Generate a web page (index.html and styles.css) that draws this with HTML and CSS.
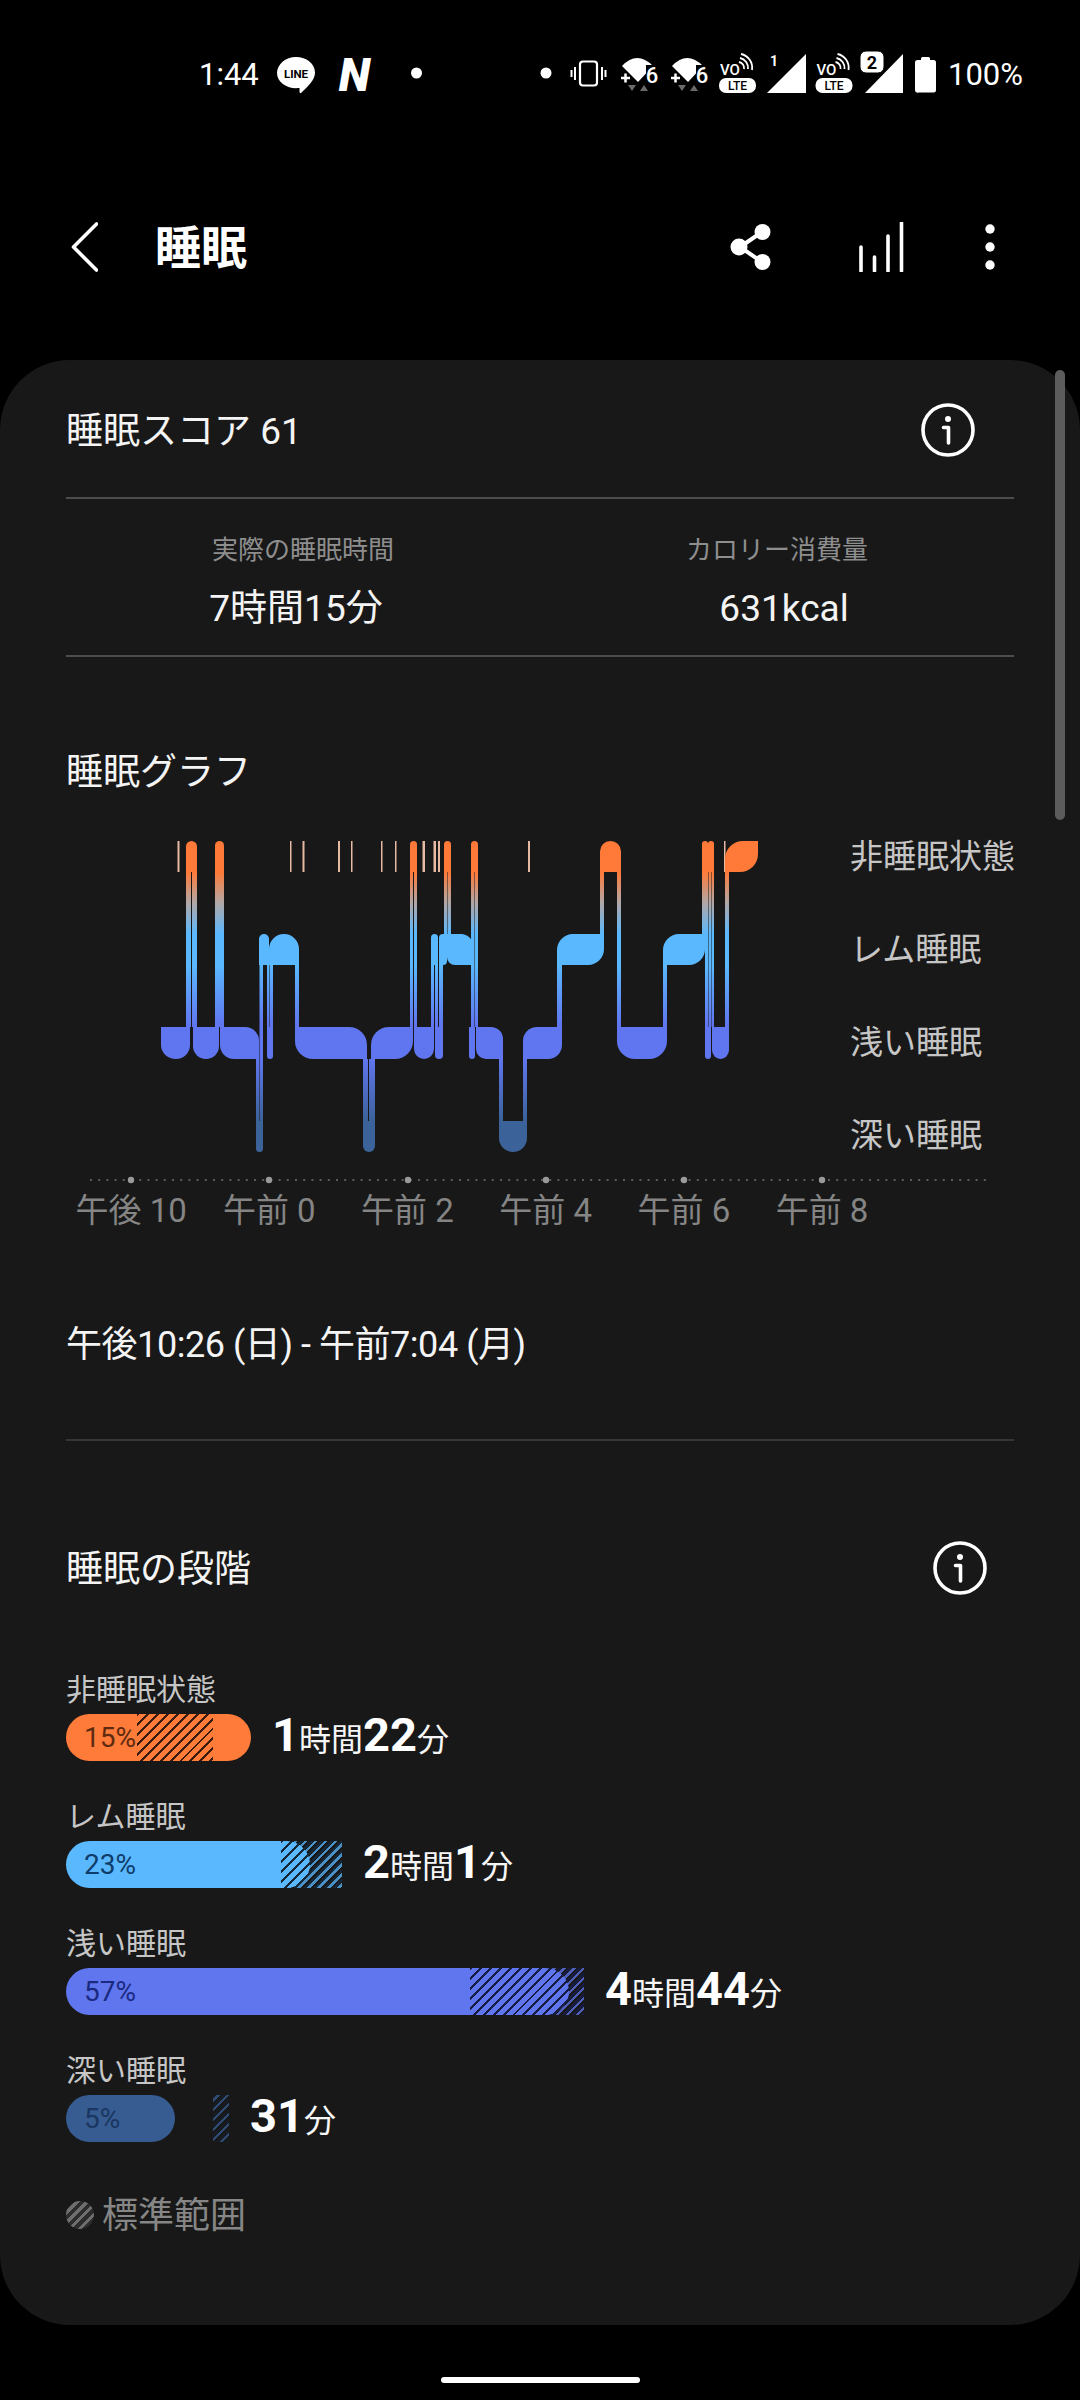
FILE: index.html
```html
<!DOCTYPE html>
<html lang="ja">
<head>
<meta charset="utf-8">
<title>睡眠</title>
<link rel="stylesheet" href="styles.css">
</head>
<body>
<div class="status">
  <span class="status-time">1:44</span>
  <svg class="st-line" width="40" height="46" viewBox="277 50 40 46">
    <path d="M297 57c10.500 0 19 6.800 19 15.500 0 8-8 14.500-14 20.500-1 0.500-1.500-0.500-1.500-1.500v-3.500c-1 0-2.500 0.200-3.500 0.200-10.500 0-19-6.800-19-15.200S286.500 57 297 57z" fill="#fff"/>
    <text x="297" y="78" class="st-svgt st-lineword">LINE</text>
  </svg>
  <span class="status-n">N</span>
  <svg class="st-dot" width="12" height="46" viewBox="412 50 12 46"><circle cx="417.500" cy="73" r="5.500" fill="#fff"/></svg>
  <svg class="st-right" width="396" height="46" viewBox="540 50 396 46">
    <defs>
      <g id="wifi">
        <path d="M622 66Q637 50 653 66L638 82Z" fill="#fff"/>
        <rect x="646" y="65" width="13" height="20" fill="#000"/>
        <text x="652" y="83" class="st-svgt st-six">6</text>
        <path d="M621 78H630M625.500 73.500V82.500" stroke="#fff" stroke-width="2.500" fill="none"/>
        <path d="M628 85H636L632 91Z M640 91H648L644 85Z" fill="#6a6a6a"/>
      </g>
      <g id="volte">
        <text x="730" y="75" class="st-svgt st-vo">VO</text>
        <path d="M739 62a6 6 0 0 1 5 7M740 58a10 10 0 0 1 8 11M741 54a14 14 0 0 1 11 16" stroke="#fff" stroke-width="1.800" fill="none"/>
        <rect x="719" y="78" width="37" height="15" rx="7" fill="#fff"/>
        <text x="737.500" y="90" class="st-svgt st-lte">LTE</text>
      </g>
    </defs>
    <circle cx="546" cy="73" r="5.500" fill="#fff"/>
    <rect x="580" y="61.500" width="17" height="24" rx="3" fill="none" stroke="#fff" stroke-width="2.200"/>
    <path d="M575 67V80M571.500 70V77M602 67V80M605.500 70V77" stroke="#fff" stroke-width="2" fill="none"/>
    <use href="#wifi"/>
    <use href="#wifi" x="50"/>
    <use href="#volte"/>
    <path d="M806 54V93H767Z" fill="#fff"/>
    <text x="774" y="66" class="st-svgt st-one">1</text>
    <use href="#volte" x="96.500"/>
    <path d="M903 54V93H865Z" fill="#fff"/>
    <rect x="860" y="51" width="24" height="22" rx="6" fill="#fff" stroke="#000" stroke-width="1"/>
    <text x="872" y="69" class="st-svgt st-two">2</text>
    <path d="M921 60V58.500a1.500 1.500 0 0 1 1.500-1.500h6a1.500 1.500 0 0 1 1.500 1.500V60h3.500a2.500 2.500 0 0 1 2.500 2.500V90a2.500 2.500 0 0 1-2.500 2.500h-15A2.500 2.500 0 0 1 915 90V62.500A2.500 2.500 0 0 1 917.500 60Z" fill="#fff"/>
  </svg>
  <span class="status-batt">100%</span>
</div>

<header class="appbar">
  <svg class="back" width="27" height="50" viewBox="0 0 27 50"><path d="M25.500 2L2.500 25L25.500 48" fill="none" stroke="#fff" stroke-width="3.600" stroke-linecap="round" stroke-linejoin="round"/></svg>
  <h1 class="title">睡眠</h1>
  <svg class="share" width="41" height="46" viewBox="0 0 41 46">
    <path d="M10 23L32 8M10 23L32 38" stroke="#fff" stroke-width="4" fill="none"/>
    <circle cx="9" cy="23" r="8.500" fill="#fff"/><circle cx="32.500" cy="8" r="8" fill="#fff"/><circle cx="32.500" cy="38" r="8" fill="#fff"/>
  </svg>
  <svg class="bars" width="45" height="50" viewBox="0 0 45 50">
    <path d="M2 49V25M15.500 49V35M29 49V14M42.500 49V1" stroke="#fff" stroke-width="3.600" stroke-linecap="round" fill="none"/>
  </svg>
  <svg class="kebab" width="10" height="46" viewBox="0 0 10 46"><circle cx="5" cy="5" r="4.700" fill="#fff"/><circle cx="5" cy="23" r="4.700" fill="#fff"/><circle cx="5" cy="41" r="4.700" fill="#fff"/></svg>
</header>

<main class="card">
  <div class="scrollbar"></div>

  <div class="row-head score-row">
    <span class="heading">睡眠スコア 61</span>
    <svg class="info info-a" width="54" height="54" viewBox="0 0 54 54">
      <circle cx="27" cy="27" r="25" fill="none" stroke="#fff" stroke-width="3.600"/>
      <circle cx="27" cy="16" r="3" fill="#fff"/>
      <path d="M22.500 24.500H27.500V40" fill="none" stroke="#fff" stroke-width="3.600" stroke-linecap="round" stroke-linejoin="round"/>
    </svg>
  </div>

  <div class="stats">
    <div class="stat stat-left"><div class="stat-label">実際の睡眠時間</div><div class="stat-value">7時間15分</div></div>
    <div class="stat stat-right"><div class="stat-label">カロリー消費量</div><div class="stat-value">631kcal</div></div>
  </div>

  <h2 class="heading graph-title">睡眠グラフ</h2>

  <div class="chart-row">
    <svg class="chart" width="784" height="365" viewBox="66 810 784 365">
      <defs>
        <linearGradient id="sleep" gradientUnits="userSpaceOnUse" x1="0" y1="841" x2="0" y2="1152">
          <stop offset="0.100" stop-color="#ff7a38"/>
          <stop offset="0.200" stop-color="#b0a8a8"/>
          <stop offset="0.300" stop-color="#5ab8ff"/>
          <stop offset="0.400" stop-color="#5ab8ff"/>
          <stop offset="0.590" stop-color="#6076f0"/>
          <stop offset="0.700" stop-color="#6076f0"/>
          <stop offset="0.900" stop-color="#3b6299"/>
          <stop offset="1" stop-color="#3b6299"/>
        </linearGradient>
      </defs>
      <g class="ticks">
        <rect x="177.500" y="841" width="2" height="31"/><rect x="290" y="841" width="1.500" height="31"/><rect x="302.500" y="841" width="2" height="31"/><rect x="338" y="841" width="2" height="31"/><rect x="351" y="841" width="1.500" height="31"/><rect x="381" y="841" width="1.500" height="31"/><rect x="395" y="841" width="1.500" height="31"/><rect x="422.500" y="841" width="2.500" height="31"/><rect x="433.500" y="841" width="2.500" height="31"/><rect x="438" y="841" width="2" height="31"/><rect x="528" y="841" width="2" height="31"/><rect x="724" y="841" width="1.500" height="31"/>
      </g>
      <g fill="url(#sleep)">
        <!-- awake -->
        <path d="M186 872V846.500a5.500 5.500 0 0 1 11 0V872Z"/>
        <path d="M215 872V845.500a4.500 4.500 0 0 1 9 0V872Z"/>
        <path d="M410 872V844.500a3.500 3.500 0 0 1 7 0V872Z"/>
        <path d="M444 872V844.500a3.500 3.500 0 0 1 7 0V872Z"/>
        <path d="M471 872V844.500a3.500 3.500 0 0 1 7 0V872Z"/>
        <path d="M600 872V851.500a10.500 10.500 0 0 1 21 0V872Z"/>
        <path d="M702 872V844a3 3 0 0 1 6 0V872Z"/>
        <path d="M708 872V844a3 3 0 0 1 6 0V872Z"/>
        <path d="M725 872V859a18 18 0 0 1 18-18H758V854a18 18 0 0 1-18 18Z"/>
        <!-- rem -->
        <path d="M259 965V939a5 5 0 0 1 10 0V965Z"/>
        <path d="M269 965V949a15 15 0 0 1 30 0V965Z"/>
        <path d="M431 965V937.500a3.500 3.500 0 0 1 7 0V965Z"/>
        <path d="M439 965V938a4 4 0 0 1 4-4H447V961a4 4 0 0 1-4 4Z"/>
        <path d="M447 934H461A12 12 0 0 1 473 946V965H455A8 8 0 0 1 447 957Z"/>
        <path d="M557 965V950a16 16 0 0 1 16-16H604V949a16 16 0 0 1-16 16Z"/>
        <path d="M663 965V950a16 16 0 0 1 16-16H705V949a16 16 0 0 1-16 16Z"/>
        <!-- light -->
        <path d="M161 1027H190V1045A14 14 0 0 1 176 1059A15 14 0 0 1 161 1045Z"/>
        <path d="M193 1027H219V1046A13 13 0 0 1 193 1046Z"/>
        <path d="M220 1027H245A14 14 0 0 1 259 1041V1059H234A14 14 0 0 1 220 1045Z"/>
        <path d="M267 1027H273V1056A3 3 0 0 1 267 1056Z"/>
        <path d="M295 1027H349A18 18 0 0 1 367 1045V1059H313A18 18 0 0 1 295 1041Z"/>
        <path d="M389 1027H413V1041A18 18 0 0 1 395 1059H371V1045A18 18 0 0 1 389 1027Z"/>
        <path d="M414 1027H434V1048.500A10 10.500 0 0 1 414 1048.500Z"/>
        <path d="M435 1027H443V1055A4 4 0 0 1 435 1055Z"/>
        <path d="M469 1027H475V1056A3 3 0 0 1 469 1056Z"/>
        <path d="M476 1027H491A12 12 0 0 1 503 1039V1059H486A10 10 0 0 1 476 1049Z"/>
        <path d="M537 1027H562V1045A14 14 0 0 1 548 1059H523V1041A14 14 0 0 1 537 1027Z"/>
        <path d="M617 1027H667V1041A18 18 0 0 1 649 1059H635A18 18 0 0 1 617 1041Z"/>
        <path d="M705 1027H711V1056A3 3 0 0 1 705 1056Z"/>
        <path d="M712 1027H729V1050A8.500 9 0 0 1 712 1050Z"/>
        <!-- deep -->
        <path d="M256 1121H263V1148.500a3.500 3.500 0 0 1-7 0Z"/>
        <path d="M363 1121H375V1146a6 6 0 0 1-12 0Z"/>
        <path d="M499 1121H527V1138a14 14 0 0 1-28 0Z"/>
        <!-- transitions awake / light -->
        <rect x="186" y="872" width="5" height="155"/><rect x="192" y="872" width="5" height="155"/>
        <rect x="215" y="872" width="9" height="155"/>
        <rect x="410" y="872" width="3" height="155"/><rect x="414" y="872" width="3" height="155"/>
        <rect x="471" y="872" width="3.500" height="155"/><rect x="475" y="872" width="3" height="155"/>
        <rect x="617" y="872" width="4" height="155"/>
        <rect x="705" y="872" width="3" height="155"/><rect x="708.500" y="872" width="2.500" height="155"/><rect x="711.500" y="872" width="2.500" height="155"/>
        <rect x="725" y="872" width="4" height="155"/>
        <!-- transitions awake / rem -->
        <rect x="444" y="872" width="3" height="62"/><rect x="447.500" y="872" width="3.500" height="62"/>
        <rect x="600" y="872" width="4" height="62"/>
        <rect x="702" y="872" width="3" height="62"/>
        <!-- transitions rem / light -->
        <rect x="267" y="965" width="2" height="62"/><rect x="269.500" y="965" width="3.500" height="62"/>
        <rect x="295" y="965" width="4" height="62"/>
        <rect x="431" y="965" width="3" height="62"/><rect x="435" y="965" width="3" height="62"/>
        <rect x="439" y="965" width="4" height="62"/>
        <rect x="557" y="965" width="5" height="62"/>
        <rect x="663" y="965" width="4" height="62"/>
        <!-- transitions to deep -->
        <rect x="259.500" y="965" width="3.500" height="156"/>
        <rect x="256" y="1059" width="3" height="62"/>
        <rect x="363" y="1059" width="5" height="62"/><rect x="369" y="1059" width="6" height="62"/>
        <rect x="499" y="1059" width="4" height="62"/><rect x="523" y="1059" width="4" height="62"/>
      </g>
    </svg>
    <div class="levels">
      <div class="level">非睡眠状態</div>
      <div class="level">レム睡眠</div>
      <div class="level">浅い睡眠</div>
      <div class="level">深い睡眠</div>
    </div>
  </div>

  <svg class="axis" width="948" height="10" viewBox="66 1175 948 10">
    <line x1="90" y1="1180" x2="986" y2="1180" stroke="#5c5c5c" stroke-width="2" stroke-dasharray="2 6.200"/>
    <g fill="#9a9a9a">
      <circle cx="131" cy="1180" r="3.200"/><circle cx="269" cy="1180" r="3.200"/><circle cx="408" cy="1180" r="3.200"/><circle cx="546" cy="1180" r="3.200"/><circle cx="684" cy="1180" r="3.200"/><circle cx="822" cy="1180" r="3.200"/>
    </g>
  </svg>
  <div class="hours">
    <span class="hour">午後 10</span><span class="hour">午前 0</span><span class="hour">午前 2</span><span class="hour">午前 4</span><span class="hour">午前 6</span><span class="hour">午前 8</span>
  </div>

  <div class="range">午後10:26 (日) - 午前7:04 (月)</div>

  <div class="row-head stages-head">
    <h2 class="heading">睡眠の段階</h2>
    <svg class="info info-b" width="54" height="54" viewBox="0 0 54 54">
      <circle cx="27" cy="27" r="25" fill="none" stroke="#fff" stroke-width="3.600"/>
      <circle cx="27" cy="16" r="3" fill="#fff"/>
      <path d="M22.500 24.500H27.500V40" fill="none" stroke="#fff" stroke-width="3.600" stroke-linecap="round" stroke-linejoin="round"/>
    </svg>
  </div>

  <div class="stages">
    <div class="stage stage-awake">
      <div class="stage-label">非睡眠状態</div>
      <div class="stage-line">
        <div class="track" style="width:185px">
          <div class="hatch hatch-under" style="left:71px;width:76px"></div>
          <div class="fill" style="width:185px">15%</div>
          <div class="hatch hatch-over" style="left:71px;width:76px"></div>
        </div>
        <div class="value"><b>1</b>時間<b>22</b>分</div>
      </div>
    </div>
    <div class="stage stage-rem">
      <div class="stage-label">レム睡眠</div>
      <div class="stage-line">
        <div class="track" style="width:276px">
          <div class="hatch hatch-under" style="left:215px;width:61px"></div>
          <div class="fill" style="width:244px">23%</div>
          <div class="hatch hatch-over" style="left:215px;width:61px"></div>
        </div>
        <div class="value"><b>2</b>時間<b>1</b>分</div>
      </div>
    </div>
    <div class="stage stage-light">
      <div class="stage-label">浅い睡眠</div>
      <div class="stage-line">
        <div class="track" style="width:518px">
          <div class="hatch hatch-under" style="left:404px;width:114px"></div>
          <div class="fill" style="width:503px">57%</div>
          <div class="hatch hatch-over" style="left:404px;width:114px"></div>
        </div>
        <div class="value"><b>4</b>時間<b>44</b>分</div>
      </div>
    </div>
    <div class="stage stage-deep">
      <div class="stage-label">深い睡眠</div>
      <div class="stage-line">
        <div class="track" style="width:163px">
          <div class="hatch hatch-under" style="left:147px;width:16px"></div>
          <div class="fill" style="width:109px">5%</div>
          <div class="hatch hatch-over" style="left:147px;width:16px"></div>
        </div>
        <div class="value"><b>31</b>分</div>
      </div>
    </div>
  </div>

  <div class="legend"><span class="legend-mark"></span><span class="legend-text">標準範囲</span></div>
</main>

<div class="navbar"><span class="nav-pill"></span></div>
</body>
</html>
```

FILE: styles.css
```css
* { box-sizing: border-box; }
html, body { margin: 0; padding: 0; }
body {
  width: 1080px;
  height: 2400px;
  background: #000;
  color: #fff;
  font-family: Roboto, "Noto Sans CJK JP", sans-serif;
  overflow: hidden;
}
h1, h2 { margin: 0; font-weight: 400; }
svg { display: block; flex: none; }

/* status bar */
.status {
  height: 146px;
  display: flex;
  align-items: center;
  padding: 0 57px 0 199px;
  font-size: 31px;
  line-height: 46px;
}
.status-time, .status-batt { padding-top: 4px; }
.st-line { margin-left: 17px; }
.status-n {
  margin-left: 23px;
  padding-top: 3px;
  width: 36px;
  font-size: 46px;
  font-weight: 900;
  font-style: italic;
  line-height: 46px;
}
.st-dot { margin-left: 36px; }
.st-right { margin-left: auto; }
.status-batt { margin-left: 12px; }
.st-svgt { fill: #fff; font-family: Roboto, sans-serif; text-anchor: middle; }
.st-lineword { fill: #000; font-size: 11.500px; font-weight: 700; }
.st-six { font-size: 22px; font-weight: 500; }
.st-vo { font-size: 15px; font-weight: 500; }
.st-lte { fill: #000; font-size: 12px; font-weight: 500; }
.st-one { font-size: 14px; font-weight: 700; }
.st-two { fill: #000; font-size: 18px; font-weight: 700; }

/* app bar */
.appbar {
  height: 214px;
  padding: 0 85px 12px 71px;
  display: flex;
  align-items: center;
}
.title {
  margin-left: 57px;
  font-size: 46px;
  font-weight: 700;
  line-height: 60px;
  padding-top: 2px;
}
.share { margin-left: auto; }
.bars { margin-left: 88px; }
.kebab { margin-left: 81px; }

/* card */
.card {
  position: relative;
  height: 1965px;
  padding: 0 66px;
  background: #181818;
  border-radius: 70px;
}
.scrollbar {
  position: absolute;
  top: 10px;
  right: 15px;
  width: 10px;
  height: 450px;
  border-radius: 5px;
  background: #5c5c5c;
}
.row-head {
  display: flex;
  align-items: center;
  justify-content: space-between;
}
.heading {
  padding-top: 3px;
  font-size: 37px;
  line-height: 50px;
  font-weight: 400;
  color: #f4f4f4;
}
.score-row {
  padding: 40px 0 37px;
  height: 139px;
  border-bottom: 2px solid #4c4c4c;
}
.info-a { margin-right: 39px; }
.info-b { margin-right: 27px; }

/* stats */
.stats {
  display: grid;
  grid-template-columns: 1fr 1fr;
  height: 158px;
  padding-top: 33px;
  border-bottom: 2px solid #4c4c4c;
  text-align: center;
}
.stat-label {
  font-size: 26px;
  line-height: 36px;
  color: #8e8e8e;
}
.stat-value {
  margin-top: 18px;
  font-size: 37px;
  line-height: 46px;
  color: #f4f4f4;
}
.stat-left .stat-value { padding-right: 14px; }
.stat-right .stat-value { padding-left: 14px; }

/* graph */
.graph-title { margin-top: 88px; }
.chart-row {
  display: flex;
  margin-top: 12px;
  height: 365px;
}
.ticks rect { fill: #e6b9a2; }
.levels {
  padding-top: 7px;
  display: flex;
  flex-direction: column;
  gap: 13px;
}
.level {
  height: 80px;
  font-size: 33px;
  line-height: 80px;
  color: #c6c6c6;
  white-space: nowrap;
}
.hours {
  display: flex;
  margin: 4px 0 0 -4px;
}
.hour {
  flex: none;
  width: 138.200px;
  text-align: center;
  font-size: 33px;
  line-height: 44px;
  color: #858585;
  white-space: nowrap;
}
.range {
  margin-top: 87px;
  padding-bottom: 69px;
  font-size: 36px;
  line-height: 50px;
  letter-spacing: -0.45px;
  color: #f4f4f4;
  border-bottom: 2px solid #363636;
}

/* stages */
.stages-head {
  margin-top: 97px;
  height: 60px;
}
.stages-head .heading { padding-top: 4px; }
.stages {
  margin-top: 70px;
  display: flex;
  flex-direction: column;
  gap: 34px;
}
.stage-awake { --c: #ff7b39; --t: #5e2a10; --h: #3a1c0e; }
.stage-rem { --c: #5ab8ff; --t: #0f3d6b; --h: #14283a; }
.stage-light { --c: #6076ee; --t: #1b2a80; --h: #171c44; }
.stage-deep { --c: #365c92; --t: #1b3660; --h: #171c24; }
.stage-label {
  padding-top: 2px;
  height: 40px;
  font-size: 30px;
  line-height: 40px;
  color: #c6c6c6;
}
.stage-line {
  margin-top: 6px;
  display: flex;
  align-items: center;
  gap: 21px;
  height: 47px;
}
.track {
  position: relative;
  flex: none;
  height: 47px;
}
.fill {
  position: relative;
  height: 47px;
  padding-left: 18px;
  border-radius: 24px;
  background: var(--c);
  color: var(--t);
  font-size: 28px;
  line-height: 47px;
}
.hatch {
  position: absolute;
  top: 0;
  height: 47px;
}
.hatch-under {
  opacity: 0.75;
  background: repeating-linear-gradient(135deg, transparent 0 2.500px, var(--c) 2.500px 5px, transparent 5px 7px);
}
.hatch-over {
  background: repeating-linear-gradient(135deg, var(--h) 0 2px, transparent 2px 7px);
}
.value {
  font-size: 32px;
  line-height: 47px;
  color: #f6f6f6;
  white-space: nowrap;
}
.value b {
  font-size: 47px;
  font-weight: 700;
  color: #fff;
}

/* legend */
.legend {
  margin-top: 46px;
  display: flex;
  align-items: center;
  gap: 8px;
  font-size: 36px;
  line-height: 50px;
  color: #868686;
}
.legend-text { padding-top: 3px; }
.legend-mark {
  width: 28px;
  height: 28px;
  border-radius: 50%;
  background: repeating-linear-gradient(135deg, #6e6e6e 0 3px, #2c2c2c 3px 7px);
}

/* nav */
.navbar {
  display: flex;
  justify-content: center;
  padding-top: 52px;
}
.nav-pill {
  width: 199px;
  height: 6px;
  border-radius: 3px;
  background: #fff;
}
```
